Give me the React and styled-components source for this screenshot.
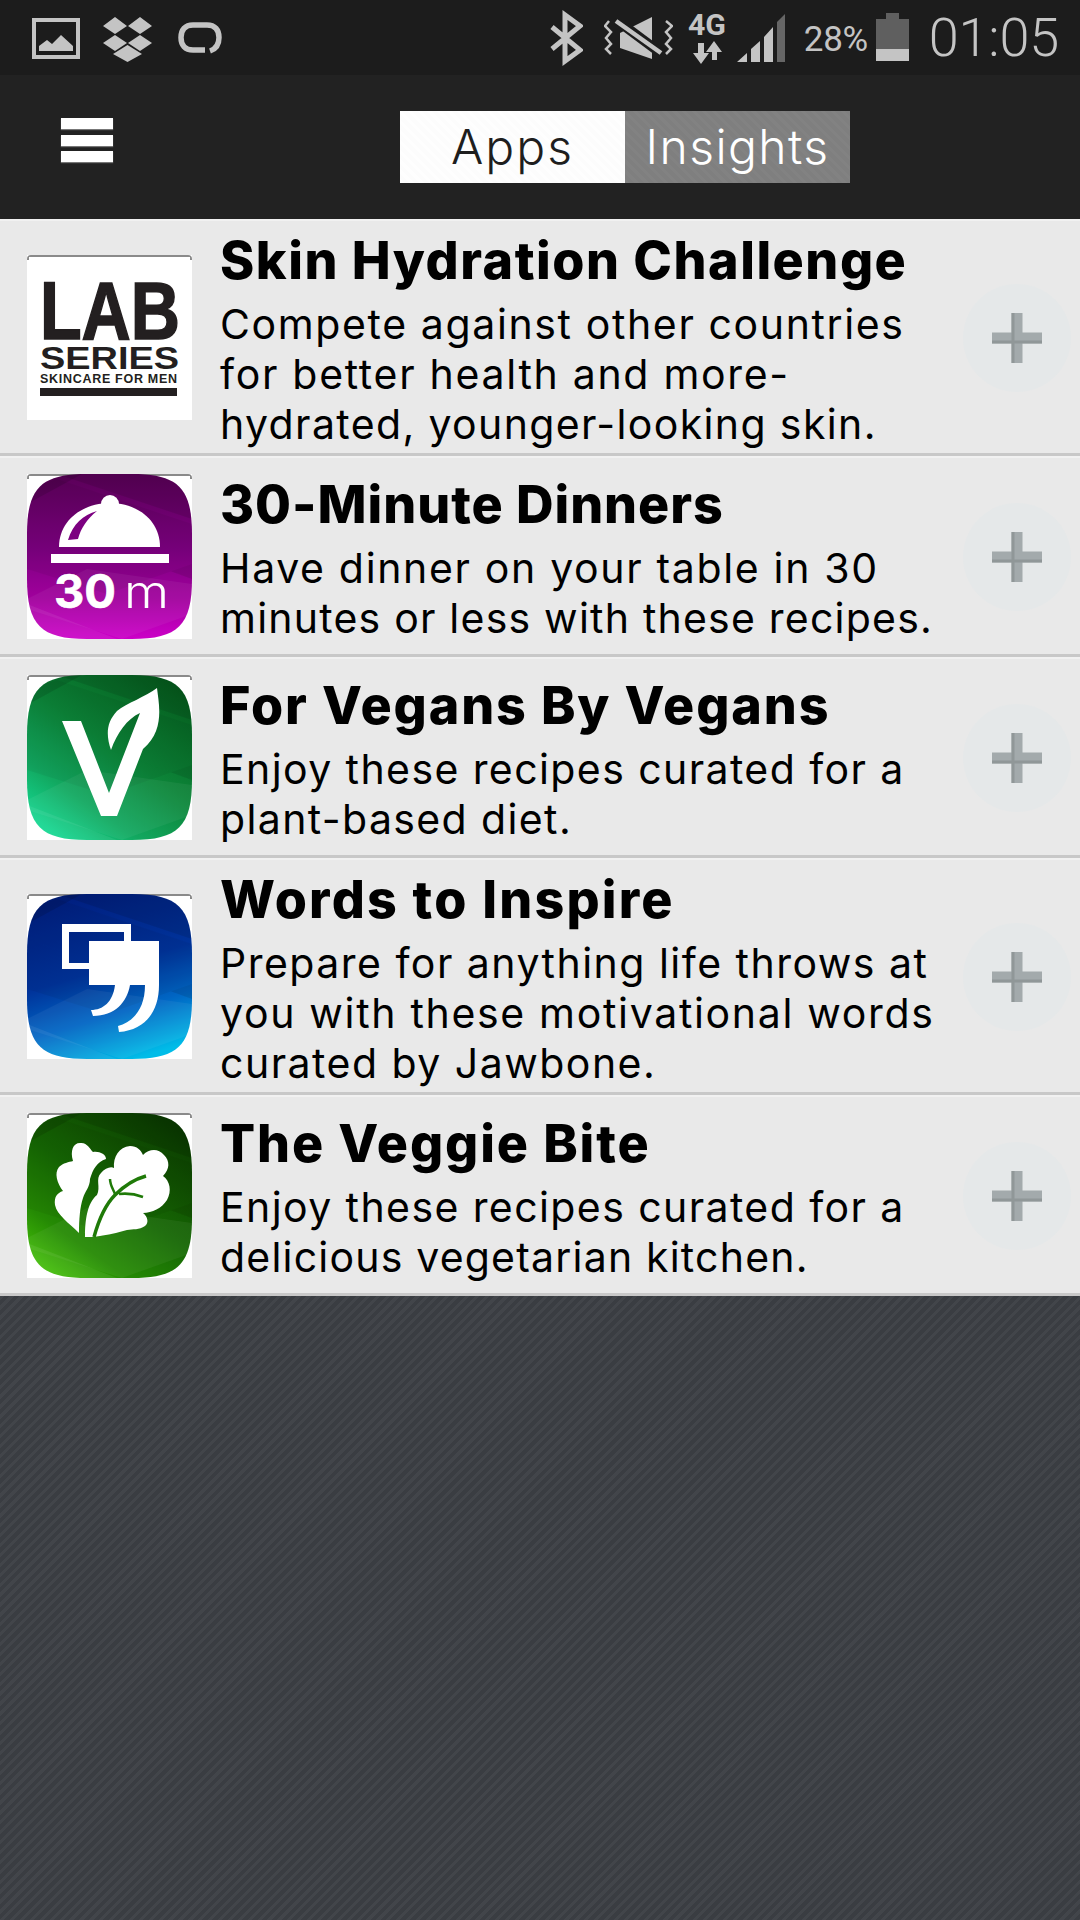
import React from 'react';
import styled, { createGlobalStyle } from 'styled-components';

const Global = createGlobalStyle`
  html, body { margin: 0; padding: 0; background: #3d4046; }
  * { box-sizing: border-box; }
`;

const Page = styled.div`
  width: 1080px;
  height: 1920px;
  overflow: hidden;
  display: flex;
  flex-direction: column;
  font-family: Inter, "Liberation Sans", sans-serif;
`;

const StatusBar = styled.div`
  height: 75px;
  flex: none;
  background: #1c1c1c;
  display: flex;
  justify-content: space-between;
  padding: 0 21px 0 32px;
`;

const StatusGroup = styled.div`
  display: flex;
  align-items: flex-start;
`;

const StatusIcon = styled.svg`
  display: block;
  flex: none;
  height: 75px;
  margin-left: ${p => p.$gap || 0}px;
`;

const Percent = styled.span`
  font-family: Roboto, sans-serif;
  font-size: 35px;
  line-height: 79px;
  color: #c4c4c4;
  margin-left: 19px;
  letter-spacing: -0.3px;
`;

const Clock = styled.span`
  font-family: Roboto, sans-serif;
  font-weight: 300;
  font-size: 54px;
  line-height: 76px;
  color: #c4c4c4;
  margin-left: 20px;
  letter-spacing: -0.2px;
`;

const NavBar = styled.div`
  height: 144px;
  flex: none;
  background: #222222;
  display: flex;
  align-items: flex-start;
  padding: 36px 0 0 61px;
`;

const Burger = styled.div`
  width: 52px;
  margin-top: 7px;
  display: flex;
  flex-direction: column;
  gap: 5.5px;
`;

const BurgerBar = styled.span`
  display: block;
  height: 11px;
  background: #ffffff;
  box-shadow: 0 1px 1px #777;
`;

const Toggle = styled.div`
  display: flex;
  margin-left: 287px;
  height: 72px;
`;

const ToggleTab = styled.div`
  display: flex;
  align-items: center;
  justify-content: center;
  padding-bottom: 2px;
  width: ${p => p.$w}px;
  font-size: 48px;
  font-weight: 300;
  letter-spacing: ${p => p.$ls}px;
  color: ${p => (p.$active ? '#1e1e1e' : '#ffffff')};
  background-color: ${p => (p.$active ? '#fcfcfc' : '#7f7f7f')};
  background-image: repeating-linear-gradient(
    45deg,
    ${p => (p.$active ? '#fefefe' : '#828282')} 0 3px,
    transparent 3px 7px
  );
`;

const List = styled.div`
  flex: none;
`;

const Row = styled.div`
  display: flex;
  align-items: center;
  min-height: 201px;
  padding: 3px 9px 0 27px;
  background: #e9e9e9;
  border-bottom: 3px solid #c8c8c8;
  box-shadow: inset 0 2px 0 #f1f1f1;
`;

const IconSvg = styled.svg`
  display: block;
  flex: none;
  width: 165px;
  height: 165px;
`;

const TextBlock = styled.div`
  flex: 1;
  min-width: 0;
  padding: 12px 0 4px 28px;
  color: #000;
`;

const Title = styled.div`
  font-size: 52px;
  font-weight: 800;
  line-height: 54px;
  margin-bottom: 11px;
  letter-spacing: ${p => p.$ls || 0}px;
  white-space: nowrap;
`;

const BodyLine = styled.div`
  font-size: 41px;
  font-weight: 400;
  line-height: 50px;
  letter-spacing: ${p => p.$ls || 0}px;
  white-space: nowrap;
`;

const AddButton = styled.div`
  flex: none;
  width: 108px;
  height: 108px;
  border-radius: 50%;
  background: #e5e8e9;
  display: flex;
  align-items: center;
  justify-content: center;
`;

const Fill = styled.div`
  flex: 1;
  background-color: #3d4046;
  background-image: repeating-linear-gradient(135deg, #42454a 0 3px, #3a3d42 3px 7px);
`;

const C = '#c4c4c4';

const PictureIcon = () => (
  <StatusIcon width="48" viewBox="0 0 48 75">
    <rect x="2" y="20" width="44" height="37" fill="none" stroke={C} strokeWidth="4" />
    <path d="M7 51 V46 L15 40 L20 44 L29 35 L41 46 V51 Z" fill={C} />
  </StatusIcon>
);

const DropboxIcon = () => (
  <StatusIcon width="49" $gap={23} viewBox="0 0 49 75">
    <path d="M12 17 L24 26 L12 34 L0 26 Z M37 17 L49 26 L37 34 L25 26 Z M12 35 L24 43 L12 51 L0 43 Z M37 35 L49 43 L37 51 L25 43 Z" fill={C} />
    <path d="M24.500 45 L39 54 L24.500 62 L10 54 Z" fill={C} />
  </StatusIcon>
);

const LoopIcon = () => (
  <StatusIcon width="44" $gap={26} viewBox="0 0 44 75">
    <path d="M27 50 H15 C7 50 3 45 3 37.500 C3 30 7 25 15 25 H29 C37 25 41 30 41 37.500 C41 44 38 49 32 51" fill="none" stroke={C} strokeWidth="5.500" />
  </StatusIcon>
);

const BluetoothIcon = () => (
  <StatusIcon width="33" viewBox="0 0 33 75">
    <path d="M2 27 L30 50 L15 61 V15 L30 26 L2 49" fill="none" stroke={C} strokeWidth="5" />
  </StatusIcon>
);

const VibrateMuteIcon = () => (
  <StatusIcon width="69" $gap={21} viewBox="0 0 69 75">
    <path d="M16 33 L48 17 V59 L16 48 Z" fill={C} />
    <path d="M11 19 L58 54" stroke="#1c1c1c" strokeWidth="10" />
    <path d="M12 21 L57 53" stroke={C} strokeWidth="4.500" />
    <path d="M5 21 L1 26 L7 32 L2 38 L7 44 L2 49 L7 54" fill="none" stroke={C} strokeWidth="2.500" />
    <path d="M62 21 L68 26 L62 32 L67 38 L62 44 L67 49 L62 54" fill="none" stroke={C} strokeWidth="2.500" />
  </StatusIcon>
);

const NetworkIcon = () => (
  <StatusIcon width="38" $gap={15} viewBox="0 0 38 75">
    <text x="19" y="35" textAnchor="middle" fontFamily="Roboto, sans-serif" fontWeight="700" fontSize="30" fill={C} textLength="38" lengthAdjust="spacingAndGlyphs">4G</text>
    <path d="M10 43 H16 V53 H21 L13 64 L5 53 H10 Z M24 52 H18 L26 41 L34 52 H29 V60 H24 Z" fill={C} />
  </StatusIcon>
);

const SignalIcon = () => (
  <StatusIcon width="48" $gap={11} viewBox="0 0 48 75">
    <path d="M0 62 L10 53 V62 Z M14 62 V49 L23 41 V62 Z M27 62 V37 L36 27 V62 Z" fill={C} />
    <path d="M40 62 V22 L48 14 V62 Z" fill="#666" />
  </StatusIcon>
);

const BatteryIcon = () => (
  <StatusIcon width="33" $gap={8} viewBox="0 0 33 75">
    <path d="M10 13 H23 V19 H33 V49 H0 V19 H10 Z" fill="#5f5f5f" />
    <rect x="0" y="49" width="33" height="12" fill={C} />
  </StatusIcon>
);

const SQUIRCLE = 'M0 60 C0 14 14 0 60 0 H105 C151 0 165 14 165 60 V105 C165 151 151 165 105 165 H60 C14 165 0 151 0 105 Z';

const AppIcon = ({ id, stops, gx = 0.15, children }) => (
  <IconSvg viewBox="0 0 165 165">
    <defs>
      <linearGradient id={`g-${id}`} x1={1 - gx} y1="0" x2={gx} y2="1">
        {stops.map(([o, c]) => (
          <stop key={o} offset={o} stopColor={c} />
        ))}
      </linearGradient>
      <clipPath id={`c-${id}`}>
        <path d={SQUIRCLE} />
      </clipPath>
    </defs>
    <rect width="165" height="165" fill="#fff" />
    <path d="M0 4 Q0 0 4 0 H161 Q165 0 165 4 V5 H163 V2 H2 V5 H0 Z" fill="#8a8a8a" />
    <g clipPath={`url(#c-${id})`}>
      <rect width="165" height="165" fill={`url(#g-${id})`} />
      <polygon points="0,0 55,0 0,30" fill="#000" fillOpacity="0.12" />
      <polygon points="30,0 165,45 165,0" fill="#000" fillOpacity="0.1" />
      <polygon points="0,45 165,105 165,50 30,5 0,15" fill="#000" fillOpacity="0.05" />
      <polygon points="0,95 80,120 165,90 165,105 0,45" fill="#000" fillOpacity="0.05" />
      <polygon points="0,135 95,165 165,140 165,110 60,95 0,125" fill="#fff" fillOpacity="0.05" />
      <polygon points="0,130 90,165 0,165" fill="#fff" fillOpacity="0.07" />
    </g>
    {children}
  </IconSvg>
);

const LabIcon = () => (
  <IconSvg viewBox="0 0 165 165">
    <rect width="165" height="165" fill="#fff" />
    <path d="M0 4 Q0 0 4 0 H161 Q165 0 165 4 V5 H163 V2 H2 V5 H0 Z" fill="#8a8a8a" />
    <text x="13" y="84" fontFamily="'Liberation Sans', sans-serif" fontWeight="700" fontSize="82" fill="#231f20" stroke="#231f20" strokeWidth="1.6" textLength="140" lengthAdjust="spacingAndGlyphs">LAB</text>
    <text x="13" y="114" fontFamily="'Liberation Sans', sans-serif" fontWeight="700" fontSize="32" fill="#231f20" textLength="139" lengthAdjust="spacingAndGlyphs">SERIES</text>
    <text x="13" y="128" fontFamily="'Liberation Sans', sans-serif" fontWeight="700" fontSize="12.500" fill="#231f20" textLength="137" lengthAdjust="spacing">SKINCARE FOR MEN</text>
    <rect x="13" y="133" width="137" height="8" fill="#231f20" />
  </IconSvg>
);

const DinnerIcon = () => (
  <AppIcon id="din" gx={0.5} stops={[[0, '#5a0058'], [0.45, '#7c0080'], [0.75, '#a0009c'], [1, '#cc00c8']]}>
    <circle cx="83" cy="30" r="9" fill="#fff" />
    <path d="M32 73 C32 46 56 29 83 29 C110 29 133 46 133 73 Z" fill="#fff" />
    <path d="M41 66 C46 50 56 41 70 37 C60 45 54 54 51 65 Z" fill="#7c0080" />
    <rect x="24" y="80" width="118" height="9" fill="#fff" />
    <text x="27" y="134" fontFamily="Inter, sans-serif" fontWeight="700" fontSize="46" fill="#fff" stroke="#fff" strokeWidth="0.6" textLength="62" lengthAdjust="spacingAndGlyphs">30</text>
    <text x="97" y="134" fontFamily="Inter, sans-serif" fontWeight="300" fontSize="46" fill="#fff" textLength="45" lengthAdjust="spacingAndGlyphs">m</text>
  </AppIcon>
);

const VeganIcon = () => (
  <AppIcon id="veg" stops={[[0, '#055a1c'], [0.45, '#0c8438'], [0.75, '#12a860'], [1, '#14dc96']]}>
    <path d="M35 46 H54 L82 118 L113 38 C100 44 90 58 84 75 C79 60 79 48 90 36 C100 28 118 22 130 13 C132 30 138 55 116 74 L90 141 H74 Z" fill="#fff" />
  </AppIcon>
);

const QuoteIcon = () => (
  <AppIcon id="quo" gx={0.65} stops={[[0, '#001f80'], [0.45, '#00339a'], [0.72, '#0066c4'], [1, '#00bce8']]}>
    <path fillRule="evenodd" d="M35 30 H104 V47 H132 V91 C132 118 118 136 92 138 L91 132 C106 128 118 115 118 91 H103 C100 108 88 122 66 122 L64 116 C76 116 86 108 88 91 H62 V75 H35 Z M42 38 V69 H62 V47 H97 V38 Z" fill="#fff" />
  </AppIcon>
);

const VeggieIcon = () => (
  <AppIcon id="vgi" stops={[[0, '#0a3800'], [0.5, '#166804'], [0.78, '#258a04'], [1, '#44c008']]}>
    <path d="M52 120 C42 110 30 102 28 92 C27 84 30 80 36 78 C30 70 27 60 32 54 C36 50 42 49 46 48 C43 38 46 30 53 30 C60 29 63 36 66 39 C72 38 79 41 79 46 C70 49 66 56 63 66 C63 74 58 78 56 85 C53 94 52 106 52 120 Z" fill="#fff" />
    <path d="M58 124 C58 108 60 90 70 82 C74 74 68 66 74 60 C78 55 84 53 87 55 C86 44 92 34 103 33 C110 33 114 37 116 42 C122 36 131 35 137 42 C143 48 143 56 136 63 C143 68 145 78 140 87 C135 95 125 100 116 100 C121 104 122 110 118 113 C112 117 106 116 100 117 C90 120 80 122 73 123 L66 124 Z" fill="#fff" />
    <path d="M67 124 C72 106 78 92 88 82 C98 72 108 66 119 63" fill="none" stroke="#1f7a08" strokeWidth="3.500" />
    <path d="M88 81 C86 76 83 72 83 66 M92 81 C100 80 108 81 116 84" fill="none" stroke="#1f7a08" strokeWidth="2.500" />
  </AppIcon>
);

const PlusIcon = () => (
  <svg width="52" height="52" viewBox="0 0 52 52">
    <defs>
      <filter id="soft"><feGaussianBlur stdDeviation="0.7" /></filter>
    </defs>
    <g filter="url(#soft)">
      <path d="M20.500 1 H31.500 V20.500 H51 V31.500 H31.500 V51 H20.500 V31.500 H1 V20.500 H20.500 Z" fill="#a3aaac" />
      <path d="M20.500 1 H23.500 V51 H20.500 Z M1 28.500 H51 V31.500 H1 Z" fill="#8b9294" fillOpacity="0.8" />
    </g>
  </svg>
);

const ITEMS = [
  {
    icon: <LabIcon />,
    title: 'Skin Hydration Challenge',
    ls: 1.5,
    lines: [['Compete against other countries', 1.62], ['for better health and more-', 1.7], ['hydrated, younger-looking skin.', 1.37]],
  },
  {
    icon: <DinnerIcon />,
    title: '30-Minute Dinners',
    ls: 0.95,
    lines: [['Have dinner on your table in 30', 1.66], ['minutes or less with these recipes.', 1.22]],
  },
  {
    icon: <VeganIcon />,
    title: 'For Vegans By Vegans',
    ls: 1.86,
    lines: [['Enjoy these recipes curated for a', 1.41], ['plant-based diet.', 1.38]],
  },
  {
    icon: <QuoteIcon />,
    title: 'Words to Inspire',
    ls: 2.2,
    lines: [['Prepare for anything life throws at', 1.48], ['you with these motivational words', 1.68], ['curated by Jawbone.', 1.48]],
  },
  {
    icon: <VeggieIcon />,
    title: 'The Veggie Bite',
    ls: 1.88,
    lines: [['Enjoy these recipes curated for a', 1.41], ['delicious vegetarian kitchen.', 1.2]],
  },
];

export default function App() {
  return (
    <Page>
      <Global />
      <StatusBar>
        <StatusGroup>
          <PictureIcon />
          <DropboxIcon />
          <LoopIcon />
        </StatusGroup>
        <StatusGroup>
          <BluetoothIcon />
          <VibrateMuteIcon />
          <NetworkIcon />
          <SignalIcon />
          <Percent>28%</Percent>
          <BatteryIcon />
          <Clock>01:05</Clock>
        </StatusGroup>
      </StatusBar>
      <NavBar>
        <Burger>
          <BurgerBar />
          <BurgerBar />
          <BurgerBar />
        </Burger>
        <Toggle>
          <ToggleTab $active $w={225} $ls={2}>Apps</ToggleTab>
          <ToggleTab $w={225} $ls={1.4}>Insights</ToggleTab>
        </Toggle>
      </NavBar>
      <List>
        {ITEMS.map(item => (
          <Row key={item.title}>
            {item.icon}
            <TextBlock>
              <Title $ls={item.ls}>{item.title}</Title>
              {item.lines.map(([text, ls]) => (
                <BodyLine key={text} $ls={ls}>{text}</BodyLine>
              ))}
            </TextBlock>
            <AddButton>
              <PlusIcon />
            </AddButton>
          </Row>
        ))}
      </List>
      <Fill />
    </Page>
  );
}
